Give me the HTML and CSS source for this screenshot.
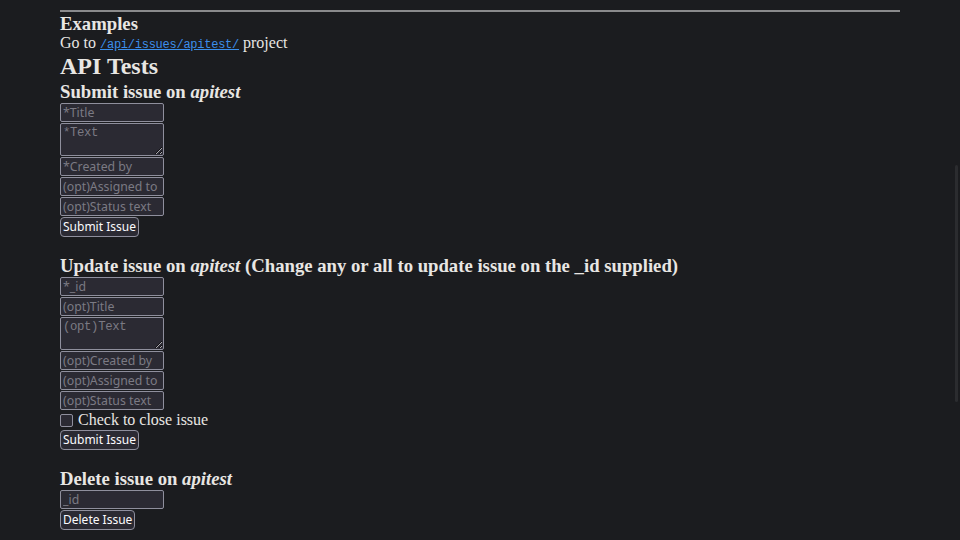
FILE: index.html
```html
<!DOCTYPE html>
<html lang="en">
<head>
<meta charset="utf-8">
<title>Issue Tracker</title>
<link rel="stylesheet" href="styles.css">
</head>
<body>
<div class="page">
  <hr class="rule">
  <h3 class="sub">Examples</h3>
  <p class="line">Go to <a class="link" href="#"><code>/api/issues/apitest/</code></a> project</p>
  <h2 class="title">API Tests</h2>

  <h3 class="sub">Submit issue on <i>apitest</i></h3>
  <form class="form">
    <input class="field" type="text" placeholder="*Title">
    <textarea class="area" placeholder="*Text"></textarea>
    <input class="field" type="text" placeholder="*Created by">
    <input class="field" type="text" placeholder="(opt)Assigned to">
    <input class="field" type="text" placeholder="(opt)Status text">
    <button class="btn" type="button">Submit Issue</button>
  </form>

  <h3 class="sub">Update issue on <i>apitest</i> (Change any or all to update issue on the _id supplied)</h3>
  <form class="form">
    <input class="field" type="text" placeholder="*_id">
    <input class="field" type="text" placeholder="(opt)Title">
    <textarea class="area" placeholder="(opt)Text"></textarea>
    <input class="field" type="text" placeholder="(opt)Created by">
    <input class="field" type="text" placeholder="(opt)Assigned to">
    <input class="field" type="text" placeholder="(opt)Status text">
    <label class="check"><span class="box"></span>Check to close issue</label>
    <button class="btn" type="button">Submit Issue</button>
  </form>

  <h3 class="sub">Delete issue on <i>apitest</i></h3>
  <form class="form">
    <input class="field" type="text" placeholder="_id">
    <button class="btn" type="button">Delete Issue</button>
  </form>
</div>
<div class="thumb"></div>
</body>
</html>
```

FILE: styles.css
```css
html, body {
  margin: 0;
  padding: 0;
  background: #1b1c1f;
  color: #e8e6e3;
  font-family: "Liberation Serif", "Times New Roman", serif;
  font-size: 16px;
  overflow: hidden;
}

.page {
  padding: 10px 60px 0 60px;
}

.rule {
  margin: 0 0 1px 0;
  height: 0;
  border: 0;
  border-top: 2px solid #8a8a8c;
}

.sub {
  margin: 0;
  font-size: 18.72px;
  line-height: 22px;
  font-weight: bold;
}

.line {
  margin: 0;
  line-height: 16.5px;
}

.link {
  color: #3b8eea;
  text-decoration: underline;
}

.link code {
  font-family: "Liberation Mono", monospace;
  font-size: 12px;
  letter-spacing: -0.25px;
}

.title {
  margin: 0;
  padding-bottom: 3px;
  font-size: 24px;
  line-height: 24px;
  font-weight: bold;
}

.form {
  display: flex;
  flex-direction: column;
  align-items: flex-start;
  margin: 0 0 18px 0;
}

.field, .area {
  box-sizing: border-box;
  width: 104px;
  background: #2b2a33;
  border: 1px solid #8f8f9d;
  border-radius: 2px;
  color: #fbfbfe;
  outline: none;
}

.field {
  height: 19px;
  margin: 0 0 1px 0;
  padding: 0 2px;
  font-family: "Noto Sans", "Open Sans", sans-serif;
  font-size: 12.3px;
}

.area {
  height: 33px;
  margin: 0 0 1px 0;
  padding: 2px 2px 1px 2px;
  resize: vertical;
  font-family: "Liberation Mono", monospace;
  font-size: 12.3px;
  letter-spacing: -0.35px;
}

.field::placeholder, .area::placeholder {
  color: #7b7a84;
  opacity: 1;
}

.btn {
  box-sizing: border-box;
  height: 20px;
  margin: 0;
  padding: 0 2px;
  background: #2b2a33;
  border: 1px solid #8f8f9d;
  border-radius: 4px;
  color: #fbfbfe;
  font-family: "Noto Sans", "Open Sans", sans-serif;
  font-size: 12px;
  line-height: 16px;
}

.check {
  display: flex;
  align-items: center;
  height: 19px;
  font-size: 16px;
}

.box {
  box-sizing: border-box;
  width: 13px;
  height: 13px;
  margin: 0 5px 0 0;
  border: 1px solid #8f8f9d;
  border-radius: 2px;
  background: #2b2a33;
}

.thumb {
  position: fixed;
  top: 165px;
  left: 955px;
  width: 3px;
  height: 237px;
  border-radius: 2px;
  background: #2b2c2f;
}
```
